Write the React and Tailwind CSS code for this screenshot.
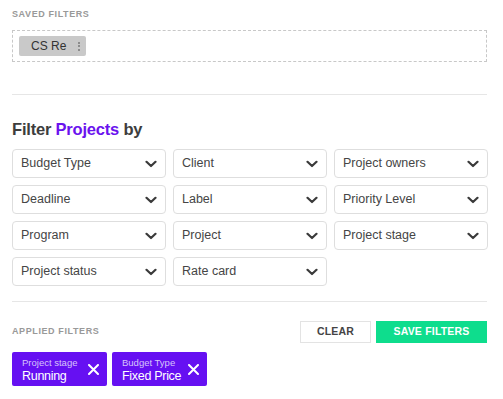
import React from "react";

const fields = [
  "Budget Type", "Client", "Project owners",
  "Deadline", "Label", "Priority Level",
  "Program", "Project", "Project stage",
  "Project status", "Rate card",
];

function Chevron() {
  return (
    <svg width="12" height="8" viewBox="0 0 12 8" fill="none">
      <path d="M1.5 1.8 L6 6 L10.5 1.8" stroke="#3a3a3a" strokeWidth="2.2" strokeLinecap="round" strokeLinejoin="round" />
    </svg>
  );
}

function XIcon() {
  return (
    <svg width="11" height="11" viewBox="0 0 11 11" fill="none">
      <path d="M1 1 L10 10 M10 1 L1 10" stroke="white" strokeWidth="2" strokeLinecap="round" />
    </svg>
  );
}

function Chip({ label, value }) {
  return (
    <div className="flex h-[34px] w-[95px] items-center rounded-[2px] bg-[#6610f2] pl-[10px] pr-[8px]">
      <div className="flex flex-col">
        <span className="text-[9.5px] leading-[13px] text-[#d6c3fb]">{label}</span>
        <span className="text-[12.5px] leading-[14px] tracking-[-0.3px] text-white">{value}</span>
      </div>
      <span className="ml-auto"><XIcon /></span>
    </div>
  );
}

export default function App() {
  return (
    <div className="w-[503px] h-[399px] bg-white px-3 font-['Liberation_Sans',Arial,sans-serif] text-[#444]">
      <div className="pt-[9px] text-[9px] font-bold tracking-[0.6px] text-[#999] leading-[10px]">SAVED FILTERS</div>
      <div className="mt-[11px] h-[32px] w-[475px] border border-dashed border-[#c8c8c8] px-[6px] pt-[5px]">
        <div className="flex h-[20px] w-[67px] items-center rounded-[2px] bg-[#c9c9c9] pl-[12px] text-[12px] text-[#333]">
          <span>CS Re</span>
          <span className="ml-auto mr-[6px] flex flex-col gap-[1.5px]">
            <span className="block h-[2px] w-[2px] rounded-full bg-[#777]" />
            <span className="block h-[2px] w-[2px] rounded-full bg-[#777]" />
            <span className="block h-[2px] w-[2px] rounded-full bg-[#777]" />
          </span>
        </div>
      </div>
      <div className="mt-[32px] h-px w-[475px] bg-[#e6e6e6]" />
      <h2 className="mt-[24px] text-[16.5px] font-bold leading-[20px] text-[#3d3d3d] tracking-[-0.2px]">
        Filter <span className="text-[#6a12ee]">Projects</span> by
      </h2>
      <div className="mt-[10px] grid w-[476px] grid-cols-3 gap-[7px]">
        {fields.map((f) => (
          <div key={f} className="flex h-[29px] items-center justify-between rounded-[4px] border border-[#dedede] pl-[8px] pr-[8px] text-[12.5px] text-[#454545]">
            <span>{f}</span>
            <Chevron />
          </div>
        ))}
      </div>
      <div className="mt-[15px] h-px w-[475px] bg-[#e6e6e6]" />
      <div className="mt-[19px] flex w-[475px] items-center">
        <div className="text-[9px] font-bold tracking-[0.6px] text-[#999]">APPLIED FILTERS</div>
        <div className="ml-auto flex gap-[5px]">
          <button className="h-[22px] w-[71px] border border-[#e3e3e3] bg-white text-[10.5px] font-bold tracking-[0.2px] text-[#444]">CLEAR</button>
          <button className="h-[22px] w-[111px] bg-[#0edd8d] text-[10.5px] font-bold tracking-[0.2px] text-white">SAVE FILTERS</button>
        </div>
      </div>
      <div className="mt-[9px] flex gap-[5px]">
        <Chip label="Project stage" value="Running" />
        <Chip label="Budget Type" value="Fixed Price" />
      </div>
    </div>
  );
}
